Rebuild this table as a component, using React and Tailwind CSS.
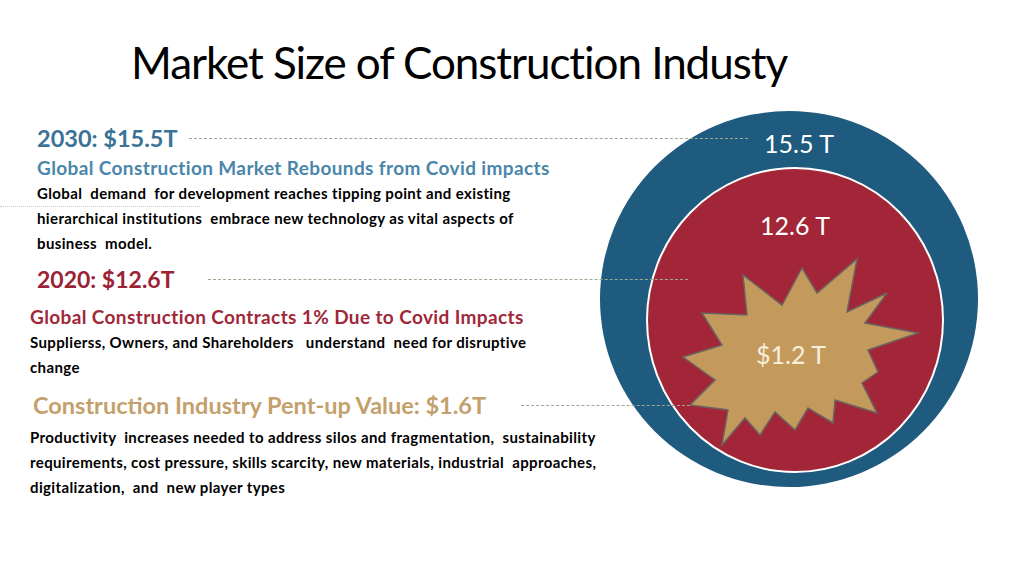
import React from 'react';

const STAR = [
  [683, 357], [722, 345], [702, 313], [747, 315], [743, 275], [782, 305],
  [802, 268], [817, 293], [857, 259], [847, 312], [887, 293], [865, 323],
  [918, 333], [868, 350], [878, 372], [862, 383], [877, 413], [835, 400],
  [833, 423], [808, 408], [795, 430], [775, 412], [760, 435], [745, 418],
  [722, 445], [728, 410], [690, 405], [715, 380],
].map(p => p.join(',')).join(' ');

const MarketChart = () => (
  <svg width="384" height="384" viewBox="598 106 384 384" className="flex-none">
    <ellipse cx="789" cy="299" rx="189" ry="188" fill="#1f5a7f" />
    <ellipse cx="795" cy="320" rx="148" ry="152" fill="#a32638" stroke="#ffffff" strokeWidth="2" />
    <polygon points={STAR} fill="#c49a5c" stroke="#6b6460" strokeWidth="1.5" strokeLinejoin="miter" />
    <text x="799" y="153" textAnchor="middle" fill="#ffffff" fontSize="25" fontFamily="Lato, sans-serif">15.5 T</text>
    <text x="795" y="235" textAnchor="middle" fill="#ffffff" fontSize="25" fontFamily="Lato, sans-serif">12.6 T</text>
    <text x="791" y="364" textAnchor="middle" fill="#f6efdc" fontSize="25" fontFamily="Lato, sans-serif">$1.2 T</text>
  </svg>
);

const Leader = ({ className }) => (
  <span className={`relative z-10 h-0 flex-1 border-t border-dashed border-[#9daa93] ${className}`} />
);

export default function App() {
  return (
    <div className="w-[1024px] h-[576px] overflow-hidden bg-white font-['Lato',sans-serif]">
      <h1 className="pt-[37px] pl-[131px] text-[44px] leading-[50px] tracking-[-0.024em] text-black">
        Market Size of Construction Industy
      </h1>

      <div className="flex items-start">
        <div className="w-[598px] flex-none pl-[30px] font-bold">
          <div className="mt-[36px] flex items-center pl-[7px]">
            <span className="text-[23.5px] leading-[30px] text-[#3a7396]">2030: $15.5T</span>
            <Leader className="ml-[12px] mr-[-150px]" />
          </div>
          <p className="mt-[2px] pl-[7px] text-[19px] leading-[26px] tracking-[0.02em] text-[#4a86aa] whitespace-nowrap">
            Global Construction Market Rebounds from Covid impacts
          </p>
          <div className="relative pl-[7px] text-[15px] leading-[25px] tracking-[0.025em] text-black whitespace-nowrap">
            <span className="absolute left-[-30px] top-[25px] w-[200px] border-t border-dotted border-[#c9c9c9]" />
            <p className="relative">Global&nbsp; demand&nbsp; for development reaches tipping point and existing</p>
            <p className="relative">hierarchical institutions&nbsp; embrace new technology as vital aspects of</p>
            <p className="relative">business&nbsp; model.</p>
          </div>

          <div className="mt-[8px] flex items-center pl-[7px]">
            <span className="text-[23px] leading-[30px] text-[#9c2236]">2020: $12.6T</span>
            <Leader className="ml-[33px] mr-[-90px]" />
          </div>
          <p className="mt-[10px] text-[19px] leading-[26px] tracking-[0.02em] text-[#a0283a] whitespace-nowrap">
            Global Construction Contracts 1% Due to Covid Impacts
          </p>
          <div className="text-[15px] leading-[25px] tracking-[0.025em] text-black whitespace-nowrap">
            <p>Supplierss, Owners, and Shareholders&nbsp;&nbsp; understand&nbsp; need for disruptive</p>
            <p>change</p>
          </div>

          <div className="mt-[10px] flex items-center pl-[3px]">
            <span className="text-[23.5px] leading-[30px] text-[#c3a06c]">Construction Industry Pent-up Value: $1.6T</span>
            <Leader className="ml-[35px] mr-[-92px]" />
          </div>
          <div className="mt-[5px] text-[15px] leading-[25px] tracking-[0.025em] text-black whitespace-nowrap">
            <p>Productivity&nbsp; increases needed to address silos and fragmentation,&nbsp; sustainability</p>
            <p>requirements, cost pressure, skills scarcity, new materials, industrial&nbsp; approaches,</p>
            <p>digitalization,&nbsp; and&nbsp; new player types</p>
          </div>
        </div>

        <div className="mt-[19px]">
          <MarketChart />
        </div>
      </div>
    </div>
  );
}
